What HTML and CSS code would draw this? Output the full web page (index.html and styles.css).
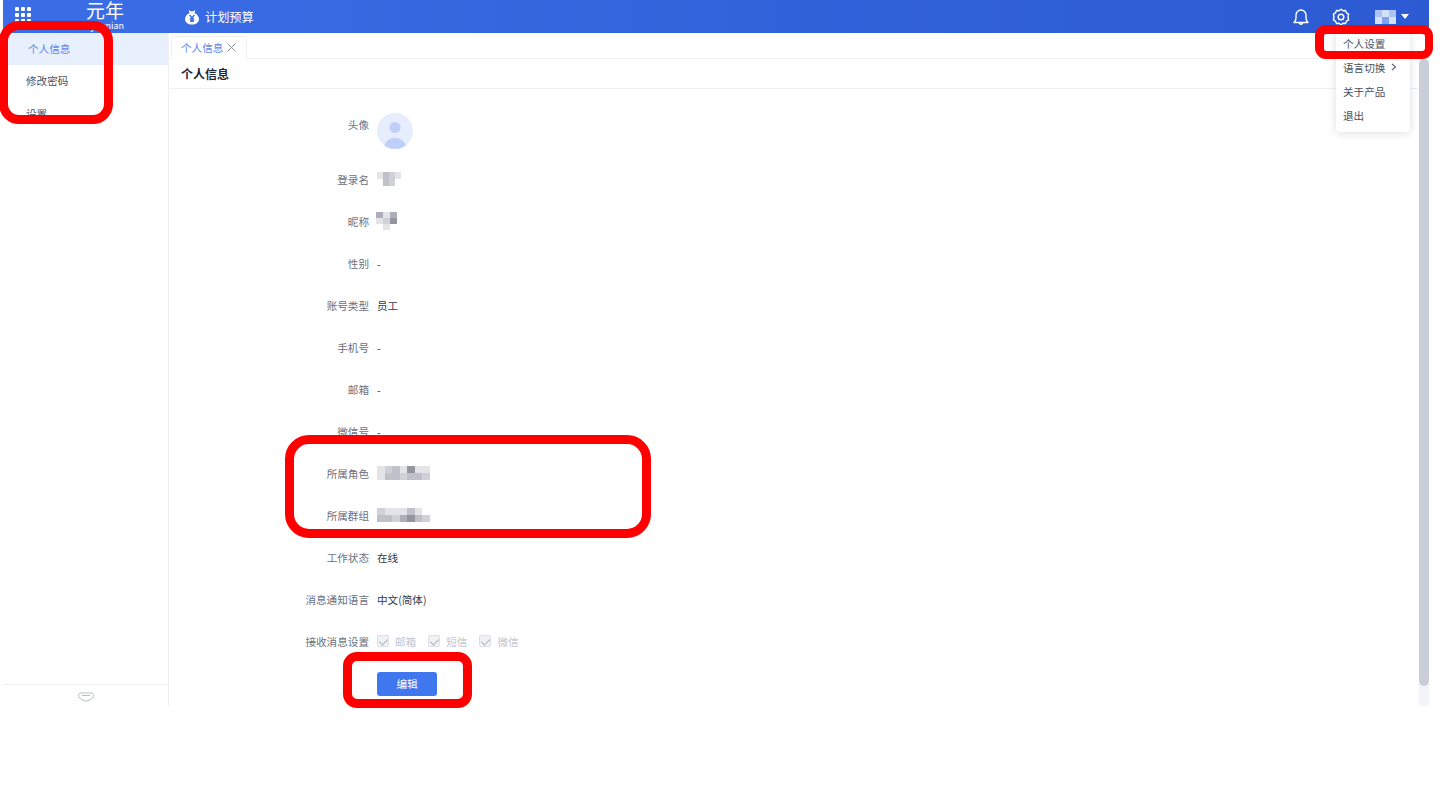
FILE: index.html
```html
<!DOCTYPE html>
<html lang="zh-CN">
<head>
  <meta charset="UTF-8">
  <meta name="viewport" content="width=device-width, initial-scale=1.0">
  <title>个人信息</title>
  <link rel="stylesheet" href="styles.css">
</head>
<body>
  <div class="app">
    <header class="topbar">
      <div class="apps-icon">
        <i></i><i></i><i></i><i></i><i></i><i></i><i></i><i></i><i></i>
      </div>
      <div class="logo">
        <span class="logo-cn">元年</span>
        <span class="logo-en">yuanian</span>
      </div>
      <div class="product">
        <svg width="16" height="16" viewBox="0 0 16 16">
          <path fill="#fff" d="M4.600 1.200 8 2.600l3.400-1.400-1 2.700C13 5 15 7.500 15 10c0 3.500-3 5.500-7 5.500S1 13.500 1 10c0-2.500 2-5 4.600-6.100z"/>
          <path fill="none" stroke="#3467e2" stroke-width="1.300" d="M5.600 6 8 9l2.400-3M8 9v4M5.800 10h4.400M5.800 12h4.400"/>
        </svg>
        <span>计划预算</span>
      </div>
      <div class="topbar-right">
        <svg class="top-icon" width="18" height="18" viewBox="0 0 18 18" fill="none" stroke="#fff" stroke-width="1.400" stroke-linejoin="round">
          <path d="M2 14.500h14c-1.300-1.300-2-2.300-2-4.500V7a5 5 0 0 0-10 0v3c0 2.200-.7 3.200-2 4.500z"/>
          <path d="M7.300 15a1.800 1.800 0 0 0 3.400 0"/>
        </svg>
        <svg class="top-icon" width="18" height="18" viewBox="0 0 18 18" fill="none" stroke="#fff" stroke-width="1.400" stroke-linejoin="round">
          <path d="M9 1.200l2 1.500 2.500-.2 1 2.300 2.100 1.400-.6 2.800.6 2.800-2.100 1.400-1 2.300-2.500-.2L9 16.800l-2-1.500-2.500.2-1-2.300-2.100-1.400L2 9l-.6-2.800 2.100-1.400 1-2.300 2.500.2z"/>
          <circle cx="9" cy="9" r="2.800"/>
        </svg>
        <div class="user">
          <div class="mosaic mosaic-user">
            <span class="u1"></span><span class="u2"></span><span class="u1"></span>
            <span class="u2"></span><span class="u3"></span><span class="u2"></span>
          </div>
          <span class="caret"></span>
        </div>
      </div>
    </header>

    <div class="content">
      <aside class="sidebar">
        <nav class="side-menu">
          <a class="side-item active">个人信息</a>
          <a class="side-item">修改密码</a>
          <a class="side-item">设置</a>
        </nav>
        <div class="side-foot">
          <svg width="16" height="10" viewBox="0 0 16 10" fill="none" stroke="#b4bccb" stroke-width="1">
            <path d="M3 1h10c1.500 0 2.500 1 2.500 2.500S14 7 12.500 7.500L10 8.500C9 9.300 7 9.300 6 8.500L3.500 7.500C2 7 .5 5 .5 3.500S1.500 1 3 1z"/>
            <path d="M4 3.500h8"/>
          </svg>
        </div>
      </aside>

      <main class="main">
        <div class="tabs">
          <div class="tab">
            <span>个人信息</span>
            <svg width="9" height="9" viewBox="0 0 9 9" stroke="#8a8f9c" stroke-width="1"><path d="M.5.500l8 8M8.500.500l-8 8"/></svg>
          </div>
        </div>
        <div class="page">
          <div class="page-pane">
            <h2 class="page-title">个人信息</h2>
            <div class="form">
              <div class="row row-avatar">
                <label>头像</label>
                <div class="avatar">
                  <svg width="36" height="36" viewBox="0 0 36 36">
                    <circle cx="18" cy="14.500" r="5.500" fill="#c0cffa"/>
                    <path fill="#c0cffa" d="M7 36c0-7 4.500-11 11-11s11 4 11 11z"/>
                  </svg>
                </div>
              </div>
              <div class="row">
                <label>登录名</label>
                <div class="mosaic mosaic-login">
                  <span class="m1"></span><span class="m3"></span><span class="m2"></span><span class="m1"></span>
                  <span class="m0"></span><span class="m3"></span><span class="m2"></span><span class="m0"></span>
                </div>
              </div>
              <div class="row">
                <label>昵称</label>
                <div class="mosaic mosaic-nick">
                  <span class="m4"></span><span class="m1"></span><span class="m4"></span>
                  <span class="m1"></span><span class="m2"></span><span class="m5"></span>
                  <span class="m0"></span><span class="m1"></span><span class="m0"></span>
                </div>
              </div>
              <div class="row"><label>性别</label><span>-</span></div>
              <div class="row"><label>账号类型</label><span>员工</span></div>
              <div class="row"><label>手机号</label><span>-</span></div>
              <div class="row"><label>邮箱</label><span>-</span></div>
              <div class="row"><label>微信号</label><span>-</span></div>
              <div class="row">
                <label>所属角色</label>
                <div class="mosaic mosaic-wide">
                  <span class="m1"></span><span class="m2"></span><span class="m3"></span><span class="m1"></span><span class="m5"></span><span class="m1"></span><span class="m1"></span>
                  <span class="m1"></span><span class="m3"></span><span class="m3"></span><span class="m2"></span><span class="m3"></span><span class="m3"></span><span class="m2"></span>
                </div>
              </div>
              <div class="row">
                <label>所属群组</label>
                <div class="mosaic mosaic-wide">
                  <span class="m2"></span><span class="m1"></span><span class="m1"></span><span class="m1"></span><span class="m3"></span><span class="m1"></span><span class="m0"></span>
                  <span class="m3"></span><span class="m3"></span><span class="m2"></span><span class="m4"></span><span class="m5"></span><span class="m3"></span><span class="m2"></span>
                </div>
              </div>
              <div class="row"><label>工作状态</label><span>在线</span></div>
              <div class="row"><label>消息通知语言</label><span>中文(简体)</span></div>
              <div class="row">
                <label>接收消息设置</label>
                <div class="checks">
                  <span class="check"><i class="box"></i>邮箱</span>
                  <span class="check"><i class="box"></i>短信</span>
                  <span class="check"><i class="box"></i>微信</span>
                </div>
              </div>
              <div class="row">
                <label></label>
                <button class="btn-edit">编辑</button>
              </div>
            </div>
          </div>
          <div class="scroll-track"><div class="scroll-thumb"></div></div>
        </div>
      </main>
    </div>

    <div class="user-menu">
      <a>个人设置</a>
      <a>语言切换
        <svg width="6" height="8" viewBox="0 0 6 8" fill="none" stroke="#555b6b" stroke-width="1.100"><path d="M1 .8 4.500 4 1 7.200"/></svg>
      </a>
      <a>关于产品</a>
      <a>退出</a>
    </div>
  </div>

  <!-- red marks drawn on top of the screenshot -->
  <div class="mark mark-side"></div>
  <div class="mark mark-menu"></div>
  <div class="mark mark-groups"></div>
  <div class="mark mark-edit"></div>
</body>
</html>
```

FILE: styles.css
```css
* {
  box-sizing: border-box;
}
body {
  margin: 0;
  background-color: #fff;
  color: #333a4d;
  font-family: "Noto Sans CJK SC", "Noto Sans", sans-serif;
  font-size: 10.600px;
}
.app {
  position: relative;
  width: 1426px;
  height: 706px;
  margin-left: 3px;
  overflow: hidden;
  display: flex;
  flex-direction: column;
}

/* top bar */
.topbar {
  flex: 0 0 33px;
  display: flex;
  align-items: center;
  background: linear-gradient(90deg, #3a6de6, #2c5ad2);
  color: #fff;
  padding-left: 12px;
}
.apps-icon {
  display: grid;
  grid-template-columns: repeat(3, 4px);
  grid-auto-rows: 4px;
  gap: 2px;
  width: 16px;
  margin-top: -4px;
}
.apps-icon i {
  background-color: #fff;
  border-radius: 1px;
}
.logo {
  width: 40px;
  margin-left: 53px;
  height: 33px;
  display: flex;
  flex-direction: column;
  align-items: flex-end;
}
.logo-cn {
  font-size: 19px;
  line-height: 20px;
  white-space: nowrap;
}
.logo-en {
  font-size: 9px;
  line-height: 10px;
  margin-top: 1px;
}
.product {
  display: flex;
  align-items: center;
  gap: 5px;
  margin-left: 60px;
  font-size: 12.200px;
}
.topbar-right {
  margin-left: auto;
  display: flex;
  align-items: center;
  gap: 22px;
  padding-right: 20px;
}
.user {
  display: flex;
  align-items: center;
  gap: 5px;
  margin-left: 3px;
}
.caret {
  width: 0;
  height: 0;
  border-left: 4px solid transparent;
  border-right: 4px solid transparent;
  border-top: 5px solid #fff;
}

/* blurred out values */
.mosaic {
  display: inline-grid;
  filter: blur(0.6px);
}
.mosaic-user {
  grid-template-columns: repeat(3, 7px);
  grid-auto-rows: 7px;
}
.mosaic-login {
  grid-template-columns: repeat(4, 6px);
  grid-auto-rows: 7px;
}
.mosaic-nick {
  grid-template-columns: repeat(3, 7px);
  grid-auto-rows: 6px;
  margin-left: -1px;
}
.mosaic-wide {
  grid-template-columns: repeat(7, 7.500px);
  grid-auto-rows: 7px;
}
.m0 { background-color: #fff; }
.m1 { background-color: #e3e3e8; }
.m2 { background-color: #d0d0d8; }
.m3 { background-color: #c0c0cb; }
.m4 { background-color: #aeaeba; }
.m5 { background-color: #94959f; }
.u1 { background-color: #a9c4f5; }
.u2 { background-color: #d5e1fa; }
.u3 { background-color: #7fa3ee; }

/* body */
.content {
  flex: 1;
  display: flex;
  min-height: 0;
}
.sidebar {
  flex: 0 0 166px;
  display: flex;
  flex-direction: column;
  border-right: 1px solid #eef0f3;
}
.side-menu {
  flex: 1;
}
.side-item {
  display: block;
  height: 33px;
  line-height: 32px;
  padding-left: 23px;
  color: #4a5060;
}
.side-item.active {
  height: 32px;
  line-height: 31px;
  padding-left: 25px;
  background-color: #e8f0fe;
  color: #5b86ea;
}
.side-foot {
  flex: 0 0 22px;
  border-top: 1px solid #eef0f3;
  display: flex;
  justify-content: center;
  align-items: center;
  padding-top: 3px;
}

.main {
  flex: 1;
  min-width: 0;
  display: flex;
  flex-direction: column;
}
.tabs {
  flex: 0 0 26px;
  display: flex;
  align-items: flex-end;
  padding-left: 2px;
  border-bottom: 1px solid #eef0f3;
}
.tab {
  height: 23px;
  width: 76px;
  margin-bottom: -1px;
  display: flex;
  align-items: center;
  gap: 4px;
  padding-left: 9px;
  background-color: #fff;
  border: 1px solid #eef0f3;
  border-bottom-color: #fff;
  border-radius: 3px 3px 0 0;
  color: #5b86ea;
}
.page {
  flex: 1;
  min-height: 0;
  display: flex;
}
.page-pane {
  flex: 1;
  min-width: 0;
}
.page-title {
  margin: 0;
  height: 30px;
  line-height: 29px;
  padding-left: 12px;
  font-size: 12px;
  font-weight: 700;
  color: #1f2433;
  border-bottom: 1px solid #eef0f3;
}
.form {
  padding-top: 24px;
}
.row {
  display: flex;
  align-items: center;
  height: 42px;
}
.row label {
  width: 200px;
  margin-right: 8px;
  text-align: right;
  color: #6a7080;
}
.row-avatar {
  height: 45px;
  align-items: flex-start;
}
.row-avatar label {
  line-height: 24px;
}
.avatar {
  width: 36px;
  height: 36px;
  border-radius: 50%;
  background-color: #e6edfd;
  overflow: hidden;
}
.checks {
  display: flex;
  gap: 12px;
}
.check {
  display: flex;
  align-items: center;
  gap: 6px;
  color: #c2c5ce;
}
.box {
  position: relative;
  width: 12px;
  height: 12px;
  background-color: #f1f2f6;
  border: 1px solid #dcdfe6;
  border-radius: 2px;
}
.box::after {
  content: "";
  position: absolute;
  left: 3px;
  top: 1px;
  width: 4px;
  height: 7px;
  border: solid #a9adb8;
  border-width: 0 1.300px 1.300px 0;
  transform: rotate(45deg);
}
.btn-edit {
  width: 60px;
  height: 24px;
  margin-top: 2px;
  padding: 0 0 2px;
  border: 0;
  border-radius: 3px;
  background-color: #3f78ee;
  color: #fff;
  font-family: inherit;
  font-size: 10.600px;
}
.scroll-track {
  flex: 0 0 10px;
  background-color: #f3f4f8;
}
.scroll-thumb {
  height: 627px;
  background-color: #c9ced8;
  border-radius: 5px;
}

/* dropdown under the user name */
.user-menu {
  position: absolute;
  top: 31px;
  left: 1333px;
  width: 74px;
  height: 101px;
  background-color: #fff;
  border-radius: 0 0 4px 4px;
  box-shadow: 0 1px 8px rgba(40, 50, 80, 0.16);
}
.user-menu a {
  display: flex;
  align-items: center;
  gap: 6px;
  height: 24px;
  padding-left: 7px;
  color: #4a5060;
}

/* red marks */
.mark {
  position: absolute;
  border: 9px solid #fe0000;
  border-radius: 20px;
}
.mark-side {
  left: -1px;
  top: 21px;
  width: 114px;
  height: 103px;
}
.mark-menu {
  left: 1315px;
  top: 25px;
  width: 118px;
  height: 34px;
  border-width: 9px 8px 8px 9px;
  border-radius: 11px;
}
.mark-groups {
  left: 285px;
  top: 435px;
  width: 366px;
  height: 103px;
  border-radius: 24px;
}
.mark-edit {
  left: 343px;
  top: 652px;
  width: 129px;
  height: 56px;
  border-radius: 14px;
}
```
